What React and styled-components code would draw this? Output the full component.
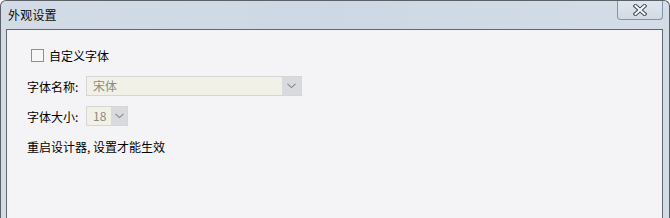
import React from "react"
import styled, { createGlobalStyle } from "styled-components"

const GlobalStyle = createGlobalStyle`
  html, body {
    margin: 0;
    padding: 0;
    background: #ffffff;
  }
  body {
    font-family: "Noto Sans CJK SC", "Liberation Sans", sans-serif;
    font-size: 12px;
    color: #000;
  }
`

const Window = styled.div`
  box-sizing: border-box;
  width: 670px;
  height: 218px;
  border: 1px solid #5c6167;
  border-bottom: none;
  border-radius: 6px 6px 0 0;
  background: linear-gradient(90deg, #d3dce6 0%, #cdd8e4 50%, #d4dde7 100%);
  display: flex;
  flex-direction: column;
  overflow: hidden;
`

const TitleBar = styled.div`
  height: 28px;
  flex: none;
  display: flex;
  align-items: flex-start;
  justify-content: space-between;
  padding-left: 7px;
  padding-right: 6px;
`

const Title = styled.span`
  line-height: 28px;
  font-size: 12px;
  color: #0c0c0c;
  letter-spacing: 0.2px;
`

const CloseButton = styled.div`
  box-sizing: border-box;
  width: 46px;
  height: 20px;
  margin-top: -1px;
  border: 1px solid #8794a3;
  border-top: none;
  border-radius: 0 0 4px 4px;
  background: linear-gradient(180deg, #dfe6ee 0%, #d2dbe5 100%);
  display: flex;
  align-items: center;
  justify-content: center;
`

const Panel = styled.div`
  flex: 1;
  margin: 0 6px 0 5px;
  border: 1px solid #63676c;
  border-bottom: none;
  background: #f4f4f6;
  display: flex;
  flex-direction: column;
  gap: 10px;
  padding: 15px 0 0 20px;
`

const Row = styled.div`
  display: flex;
  align-items: center;
  height: 20px;
  margin-left: ${(p) => p.$indent || 0}px;
  margin-bottom: ${(p) => p.$extra || 0}px;
`

const CheckBox = styled.span`
  box-sizing: border-box;
  width: 13px;
  height: 13px;
  border: 1px solid #8e8f8f;
  background: #f7f7f7;
  margin-right: 5px;
`

const Label = styled.span`
  width: 59px;
  flex: none;
`

const Select = styled.div`
  box-sizing: border-box;
  width: ${(p) => p.$width}px;
  height: 20px;
  border: 1px solid #d6d6d8;
  display: flex;
  background: #d9dadd;
`

const Value = styled.span`
  flex: 1;
  background: #f2f1e7;
  color: #8b8b80;
  padding-left: 6px;
  line-height: 18px;
`

const Arrow = styled.span`
  width: ${(p) => p.$width}px;
  flex: none;
  display: flex;
  align-items: center;
  justify-content: center;
`

const Chevron = () => (
  <svg width="9" height="6" viewBox="0 0 9 6">
    <path d="M0.5 0.8 L4.5 4.6 L8.5 0.8" fill="none" stroke="#85878a" strokeWidth="1.1" />
  </svg>
)

const CloseGlyph = () => (
  <svg width="14" height="12" viewBox="0 0 14 12">
    <path d="M2.5 2 L11.5 10 M11.5 2 L2.5 10" stroke="#3e4a57" strokeWidth="4" strokeLinecap="square" />
    <path d="M2.5 2 L11.5 10 M11.5 2 L2.5 10" stroke="#ffffff" strokeWidth="2" strokeLinecap="square" />
  </svg>
)

const App = () => (
  <>
    <GlobalStyle />
    <Window>
      <TitleBar>
        <Title>外观设置</Title>
        <CloseButton>
          <CloseGlyph />
        </CloseButton>
      </TitleBar>
      <Panel>
        <Row $indent={4} $extra={1}>
          <CheckBox />
          <span>自定义字体</span>
        </Row>
        <Row>
          <Label>字体名称:</Label>
          <Select $width={216}>
            <Value>宋体</Value>
            <Arrow $width={19}>
              <Chevron />
            </Arrow>
          </Select>
        </Row>
        <Row>
          <Label>字体大小:</Label>
          <Select $width={42}>
            <Value>18</Value>
            <Arrow $width={16}>
              <Chevron />
            </Arrow>
          </Select>
        </Row>
        <Row>
          <span>重启设计器, 设置才能生效</span>
        </Row>
      </Panel>
    </Window>
  </>
)

export default App
